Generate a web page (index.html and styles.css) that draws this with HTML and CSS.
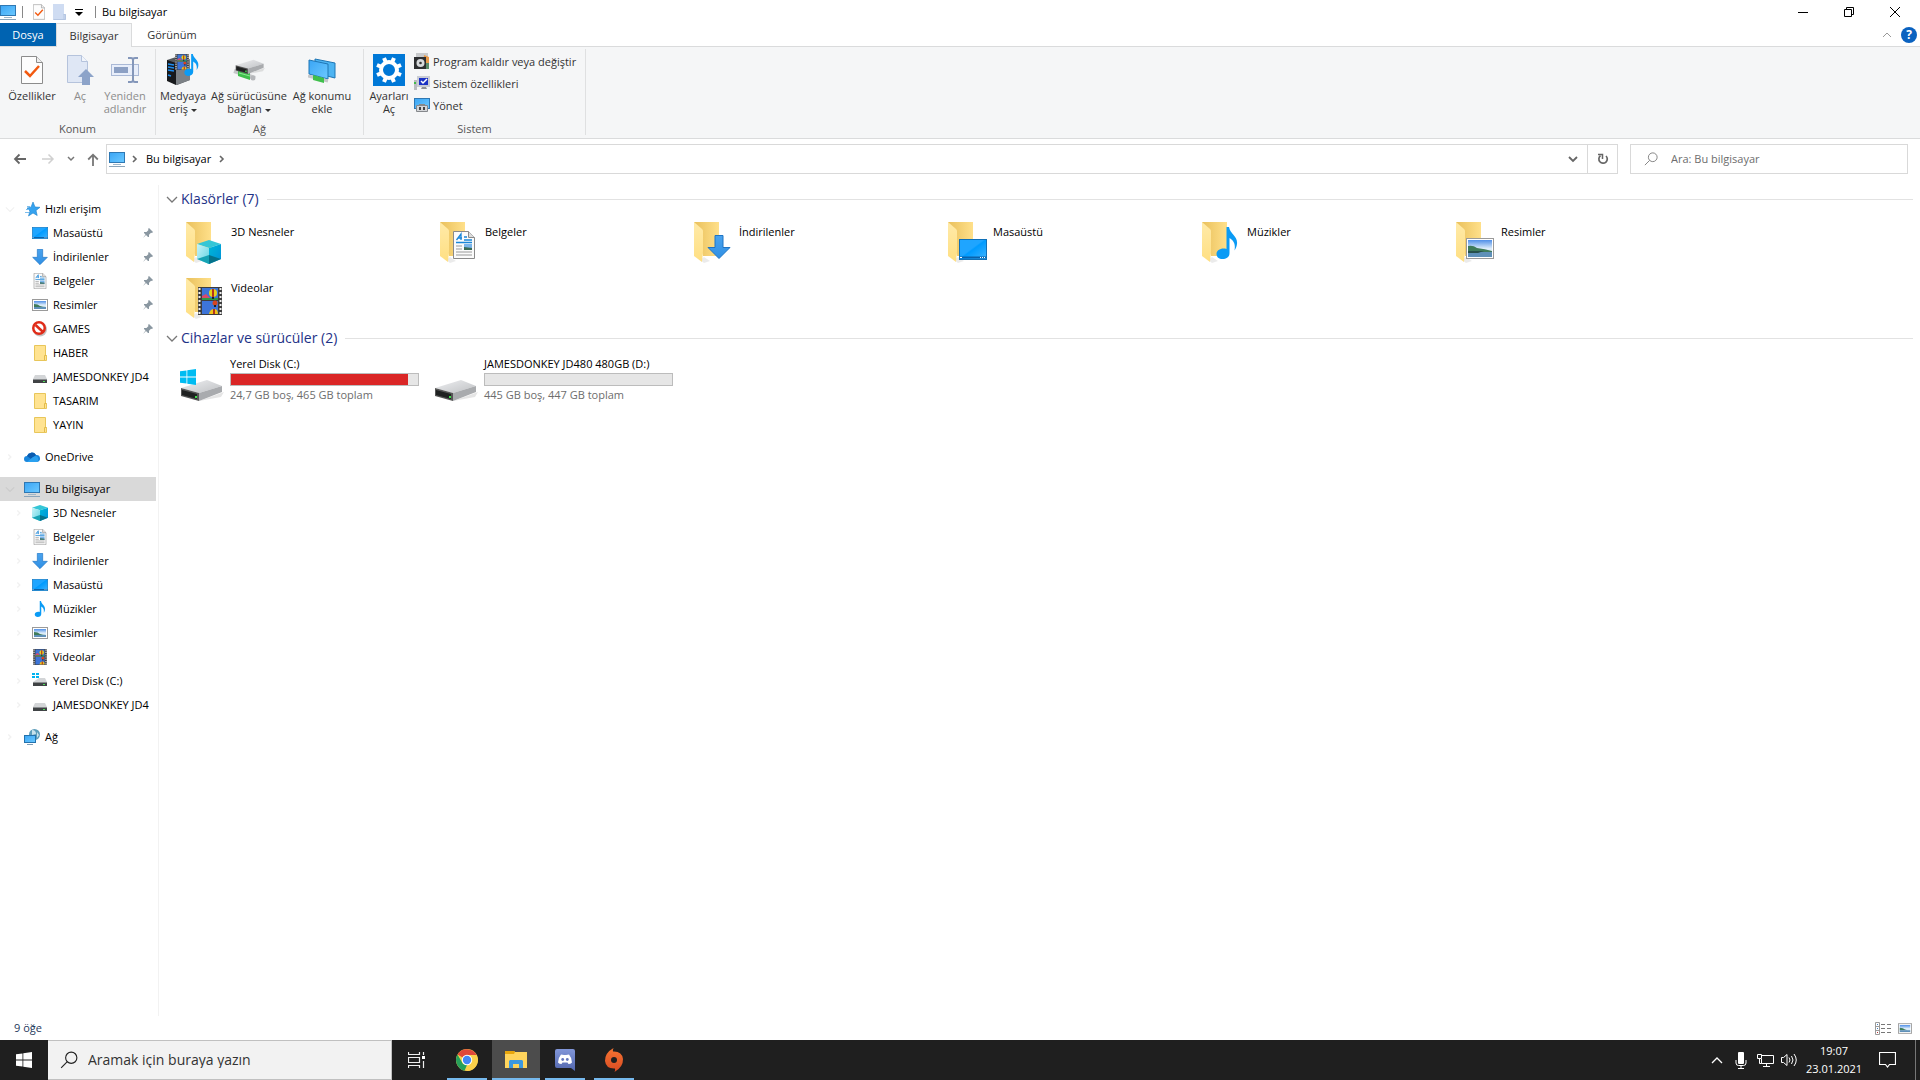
FILE: index.html
```html
<!DOCTYPE html>
<html lang="tr">
<head>
  <meta charset="UTF-8">
  <meta name="viewport" content="width=device-width, initial-scale=1.0">
  <title>Bu bilgisayar</title>
  <link rel="stylesheet" href="styles.css">
</head>
<body>

  <!-- icon library -->
  <svg class="sprite" width="0" height="0" aria-hidden="true">
    <defs>
      <linearGradient id="gScreen" x1="0" y1="0" x2="1" y2="1"><stop offset="0" stop-color="#3aa5f5"/><stop offset="1" stop-color="#6cc9ff"/></linearGradient>
      <linearGradient id="gDesk" x1="0" y1="0" x2="1" y2="1"><stop offset="0" stop-color="#1fa5ff"/><stop offset=".45" stop-color="#1fa5ff"/><stop offset=".5" stop-color="#009bff"/><stop offset="1" stop-color="#40b4ff"/></linearGradient>
      <linearGradient id="gFoldBack" x1="0" y1="0" x2="1" y2="0"><stop offset="0" stop-color="#e9c05c"/><stop offset="1" stop-color="#ffe08a"/></linearGradient>
      <linearGradient id="gFoldFront" x1="0" y1="0" x2="0" y2="1"><stop offset="0" stop-color="#ffeaa8"/><stop offset="1" stop-color="#ffdf82"/></linearGradient>
      <linearGradient id="gArrow" x1="0" y1="0" x2="0" y2="1"><stop offset="0" stop-color="#4aa3ee"/><stop offset="1" stop-color="#2f8fe4"/></linearGradient>
      <linearGradient id="gSky" x1="0" y1="0" x2="0" y2="1"><stop offset="0" stop-color="#4f8fe8"/><stop offset=".5" stop-color="#dcecfa"/></linearGradient>
      <linearGradient id="gDrive" x1="0" y1="0" x2="1" y2="1"><stop offset="0" stop-color="#eeeff1"/><stop offset="1" stop-color="#bfc1c4"/></linearGradient>
      <linearGradient id="gCubeL" x1="0" y1="0" x2="1" y2="1"><stop offset="0" stop-color="#c9f4f8"/><stop offset="1" stop-color="#5fd3e2"/></linearGradient>
      <linearGradient id="gCubeR" x1="0" y1="0" x2="1" y2="1"><stop offset="0" stop-color="#00b8d8"/><stop offset="1" stop-color="#0090d8"/></linearGradient>
      <linearGradient id="gDiscord" x1="0" y1="0" x2="0" y2="1"><stop offset="0" stop-color="#8196d8"/><stop offset="1" stop-color="#5266ad"/></linearGradient>
      <linearGradient id="gOrigin" x1="0" y1="0" x2="0" y2="1"><stop offset="0" stop-color="#f57432"/><stop offset="1" stop-color="#d94b22"/></linearGradient>
    </defs>

    <symbol id="i-pc" viewBox="0 0 16 16">
      <rect x=".5" y="1.500" width="15" height="10" fill="url(#gScreen)" stroke="#2f78b3"/>
      <path d="M4 13.500h8" stroke="#9fb6c8"/><path d="M0 15.500h16" stroke="#8ba5ba"/>
    </symbol>
    <symbol id="i-check" viewBox="0 0 22 28">
      <path d="M.5.5h15l6 6v21H.5z" fill="#fdfdfd" stroke="#8c8c8c"/>
      <path d="M15.500.5v6h6" fill="#eee" stroke="#8c8c8c"/>
      <path d="M4 15l5 5L18 10" fill="none" stroke="#f2590f" stroke-width="2.500"/>
    </symbol>
    <symbol id="i-folder-pale" viewBox="0 0 13 16">
      <path d="M0 0h11v10h2v6H0z" fill="#cfdcf2"/><path d="M11 10v6M.5 15.500h12V10.500h-2" stroke="#b5c6e2" fill="none"/>
    </symbol>
    <symbol id="i-open" viewBox="0 0 28 30">
      <path d="M1.500.5h14l6 6v21h-20z" fill="#dfe7f5" stroke="#b5c3dc"/><path d="M15.500.5v6h6" fill="#f1f5fb" stroke="#b5c3dc"/>
      <path d="M20 14l8 8h-4v8h-8v-8h-4z" fill="#8ca3c9"/>
    </symbol>
    <symbol id="i-rename" viewBox="0 0 28 26">
      <rect x=".5" y="7.500" width="27" height="11" fill="#e8eefa" stroke="#aab9d6"/>
      <rect x="3" y="10" width="14" height="6" fill="#8ca0c4"/>
      <path d="M17 1h3q2 0 2 2v20q0 2-2 2h-3M27 1h-3q-2 0-2 2M27 25h-3q-2 0-2-2" fill="none" stroke="#8497ba" stroke-width="2"/>
    </symbol>
    <symbol id="i-film" viewBox="0 0 24 28">
      <path d="M0 0h24v28H0z" fill="#3d3d3d"/>
      <path d="M4 1h16v12H4zM4 14h16v13H4z" fill="#3d74d8"/>
      <path d="M1.500 1v27M22.500 1v27" stroke="#eee" stroke-width="2" stroke-dasharray="2 2"/>
      <path d="M4 9l4-2 3 3 3 3H4z" fill="#d84a6a"/><path d="M4 11h16v2H4z" fill="#2c9a48"/>
      <circle cx="15" cy="6" r="4" fill="#e8d21c"/><path d="M15 2v8" stroke="#b6331e" stroke-width="2"/><path d="M14 10h2v2h-2z" fill="#222"/>
      <circle cx="17" cy="16" r="2.500" fill="#d6451f"/><path d="M16 18h2v2h-2z" fill="#222"/>
      <path d="M11 27q1-5 5-5t4 5z" fill="#f0c419"/><path d="M15 22h2v5h-2z" fill="#b6331e"/>
    </symbol>
    <symbol id="i-note" viewBox="0 0 22 32">
      <path d="M10.500 0H13c1 7 9 9 8 17-.3 3-1.500 5-2.500 6.500.8-5 .5-9-5-12.500V26c0 4-3 6-7 6-3.500 0-6-2-6-5 0-4 5-6.500 10-5z" fill="#0a9bf5"/>
    </symbol>
    <symbol id="i-media" viewBox="0 0 32 32">
      <path d="M0 6l9-3 14 3v20l-13 5L0 26z" fill="#555a60"/><path d="M0 6l9 3v22L0 27z" fill="#17191c"/><path d="M9 9l14-4v21L9 31z" fill="#7c8186"/>
      <path d="M1 10l6 1M1 13l6 1M1 16l6 1M1 21l3 1" stroke="#1e8df0" stroke-width="1.500"/>
      <use href="#i-film" x="8" y="0" width="14" height="16"/>
      <use href="#i-note" x="17" y="0" width="15" height="22"/>
    </symbol>
    <symbol id="i-drive" viewBox="0 0 44 22">
      <path d="M6 19l13 3 25-9-3 5-22 4z" fill="#000" opacity=".1"/>
      <path d="M1 9L27 1l15 6-23 7z" fill="url(#gDrive)"/>
      <path d="M42 7v6l-23 9v-8z" fill="#a9abae"/>
      <path d="M1 9l18 5v8L1 17z" fill="#555"/><path d="M2 11l15 4v5L2 16z" fill="#1f2121"/>
      <path d="M15 17h2v2h-2z" fill="#3fe04c"/>
    </symbol>
    <symbol id="i-netdrive" viewBox="0 0 32 22">
      <path d="M1 12l21 7" stroke="#c4c6c8" stroke-width="4"/><path d="M5 11l12 3v7L5 17z" fill="#3fbf4c"/><path d="M6 14l11 3" stroke="#8be892"/>
      <use href="#i-drive" x="2" y="0" width="30" height="15"/>
      <circle cx="20" cy="19" r="2.500" fill="#b5b7ba"/>
    </symbol>
    <symbol id="i-netplace" viewBox="0 0 28 25">
      <path d="M7 1l20 4v15L7 15z" fill="#4db4f2" stroke="#1f76b5"/>
      <path d="M1 2l19 4v15L1 16z" fill="url(#gScreen)" stroke="#1f76b5"/>
      <path d="M0 18l20 5" stroke="#c4c6c8" stroke-width="3"/><path d="M5 17l11 3v5L5 22z" fill="#3fbf4c"/>
    </symbol>
    <symbol id="i-settings" viewBox="0 0 32 32">
      <path d="M0 0h32v32H0z" fill="#0078d7"/>
      <circle cx="16" cy="16" r="8" fill="none" stroke="#fff" stroke-width="4"/>
      <path d="M16 3v5M16 24v5M3 16h5M24 16h5M6.800 6.800l3.500 3.500M21.700 21.700l3.500 3.500M6.800 25.200l3.500-3.500M21.700 10.300l3.500-3.500" stroke="#fff" stroke-width="4" transform="rotate(22.500 16 16)"/>
    </symbol>
    <symbol id="i-program" viewBox="0 0 16 16">
      <path d="M2 0h12v4H2z" fill="#c8cacc"/><path d="M10 2l5 2v11H9z" fill="#e89a4a"/><path d="M9 10h6v6H9z" fill="#5c8d6b"/>
      <path d="M0 4h12v12H0z" fill="#2d2f31"/><circle cx="6.500" cy="10" r="4" fill="#d7dadc"/><circle cx="6.500" cy="10" r="1.300" fill="#333"/>
    </symbol>
    <symbol id="i-sysprop" viewBox="0 0 16 16">
      <path d="M0 5h3v10H0z" fill="#b9bcc0"/><path d="M0 7h2v2H0z" fill="#41b94a"/>
      <path d="M3 1h13v11H3z" fill="#c9ccd4"/><path d="M5 3h9v7H5z" fill="#1b32c4"/>
      <path d="M7 6l2 2 4-4" fill="none" stroke="#fff" stroke-width="1.500"/><path d="M8 12h4l1 2H7z" fill="#8e9196"/>
    </symbol>
    <symbol id="i-manage" viewBox="0 0 16 16">
      <rect x=".5" y="1.500" width="15" height="10" fill="url(#gScreen)" stroke="#2f78b3"/>
      <path d="M5 7h6v2H5z" fill="#888"/><path d="M2.500 8.500h11v6h-11z" fill="#d4d6d9" stroke="#85888c"/><path d="M5 10h2v3H5zM9 10h2v3H9z" fill="#444"/>
    </symbol>
    <symbol id="i-search" viewBox="0 0 16 16">
      <circle cx="10" cy="6" r="5" fill="none" stroke="currentColor"/><path d="M6.500 9.500L1 15" stroke="currentColor"/>
    </symbol>
    <symbol id="i-star" viewBox="0 0 16 16">
      <path d="M9 1l2 5 5 .3-4 3.200 1.200 5L9 12l-4.500 3L6 10 3 7l4-.8z" fill="#35a3f0" stroke="#1b7fc9" stroke-width=".6"/>
      <path d="M3 5.500h3M2 8.500h3M1 11.500h4" stroke="#7dbdec"/>
    </symbol>
    <symbol id="i-desk" viewBox="0 0 28 21">
      <rect x=".5" y=".5" width="27" height="20" fill="url(#gDesk)" stroke="#0f70b8"/>
      <path d="M1 18.500h26" stroke="#0b62ab" stroke-width="2"/><path d="M1 18.500h2M21 18.500h1M23 18.500h1M25 18.500h1" stroke="#fff"/>
    </symbol>
    <symbol id="i-down" viewBox="0 0 24 24">
      <path d="M8 .5h8v12h7L12 23.500 1 12.500h7z" fill="url(#gArrow)" stroke="#1f74c4"/>
    </symbol>
    <symbol id="i-doc" viewBox="0 0 22 28">
      <path d="M.5.5h15l6 6v21H.5z" fill="#fbfbfb" stroke="#8a8a8a"/><path d="M15.500.5v6h6" fill="#ddd" stroke="#8a8a8a"/>
      <path d="M3.500 9l4.500-6v6M5 7h4M11 6h3M11 9h8M3 11.500h16" fill="none" stroke="#1a86d8" stroke-width="1.300"/>
      <path d="M3 15h6M3 18h6M3 21h16M3 24h16" stroke="#9a9a9a" stroke-width="1.200"/>
      <path d="M11 13h8v6h-8z" fill="#79b4ea"/><path d="M11 16l8 1v2h-8z" fill="#3a6b55"/>
    </symbol>
    <symbol id="i-pic" viewBox="0 0 28 21">
      <rect x=".5" y=".5" width="27" height="20" fill="#fff" stroke="#9a9a9a"/>
      <path d="M2 2h24v17H2z" fill="url(#gSky)"/><path d="M2 8q5-1 9 2 8 1 15 3v2H2z" fill="#3f7b5a"/><path d="M2 14h24v5H2z" fill="#5f90b8"/><path d="M2 13h16l-6 2H2z" fill="#274f4a"/>
    </symbol>
    <!-- small picture frame for the tree and view switch -->
    <symbol id="i-pic-s" viewBox="0 0 16 12">
      <rect x=".5" y=".5" width="15" height="11" fill="#fff" stroke="#9a9a9a"/>
      <path d="M2 2h12v8H2z" fill="url(#gSky)"/><path d="M2 5q4 0 6 2 3 1 6 1H2z" fill="#3f7b5a"/><path d="M2 8h12v2H2z" fill="#5f90b8"/>
    </symbol>
    <symbol id="i-ban" viewBox="0 0 16 16">
      <circle cx="8" cy="8.500" r="7" fill="#8a8a8a" opacity=".5"/><circle cx="7" cy="7" r="7" fill="#e02b18"/><circle cx="7" cy="7" r="4.500" fill="#fff"/><path d="M3.500 4l7 6.500" stroke="#e02b18" stroke-width="2.500"/>
    </symbol>
    <symbol id="i-folder" viewBox="0 0 16 16">
      <path d="M2.500.5h11v10h1v5h-12z" fill="#ffe391" stroke="#e8c65a"/><path d="M12.500 15v-4.500h2" fill="none" stroke="#e3bb4a"/>
    </symbol>
    <symbol id="i-hdd" viewBox="0 0 16 16">
      <path d="M3 6h10l2 4H1z" fill="#d3d5d7"/><path d="M1 10h14v4H1z" fill="#404345"/><path d="M1 10h14v1H1z" fill="#8b8e90"/><path d="M11 12h2v1h-2z" fill="#4fe05a"/>
    </symbol>
    <symbol id="i-cdrive" viewBox="0 0 16 16">
      <path d="M0 0h3v2H0zM4 0h3v2H4zM0 3h3v2H0zM4 3h3v2H4z" fill="#00b3f0"/>
      <path d="M7 5h6l2 4H1z" fill="#d3d5d7"/><path d="M1 9h14v4H1z" fill="#404345"/><path d="M1 9h14v1H1z" fill="#8b8e90"/><path d="M11 11h2v1h-2z" fill="#4fe05a"/>
    </symbol>
    <symbol id="i-cloud" viewBox="0 0 16 16">
      <path d="M3 13a3 3 0 0 1 0-6 5 5 0 0 1 9-1 3.500 3.500 0 0 1 1 7z" fill="#1a86dc"/><path d="M3 7a5 5 0 0 1 9-1l-5 4z" fill="#0b5cb0"/><path d="M3 13l6-5 3-1a3.500 3.500 0 0 1 1 6z" fill="#2aa1f0"/>
    </symbol>
    <symbol id="i-cube" viewBox="0 0 24 24">
      <path d="M12 0l12 4-12 4L0 4z" fill="#35c6d6"/><path d="M0 4l12 4v16L0 19z" fill="url(#gCubeL)"/><path d="M12 8l12-4v15l-12 5z" fill="url(#gCubeR)"/>
      <path d="M0 19l12-4v9z" fill="#17a3b4"/><path d="M12 15l12 4-12 5z" fill="#05728a"/>
    </symbol>
    <symbol id="i-net" viewBox="0 0 16 16">
      <circle cx="10.500" cy="5.500" r="5.500" fill="#5d9dba"/><path d="M8 1q4 0 4 4l-4 1zM13 3l2 3-2 3z" fill="#c9e2ec"/>
      <rect x=".5" y="6.500" width="11" height="7" fill="url(#gScreen)" stroke="#2472ad"/><path d="M3 15.500h6" stroke="#7f9db5"/>
    </symbol>
    <symbol id="i-pin" viewBox="0 0 10 10">
      <path d="M6 0l4 4-1 1-1-.3-2 2V9L5 9 3 7 0 10l2.500-3.500L1 5V4h2.500l2-2L5 1z" fill="#8a97a1"/>
    </symbol>
    <symbol id="i-bigfolder" viewBox="0 0 38 42">
      <path d="M6 38l4 3 6-2-6-4z" fill="#000" opacity=".08"/>
      <path d="M0 0h25v34H9z" fill="url(#gFoldBack)"/><path d="M0 0l8 7q1 1 1 2v20l-1 11-8-6z" fill="url(#gFoldFront)"/>
    </symbol>
    <symbol id="i-win" viewBox="0 0 16 16">
      <path d="M0 2.300l6.500-.9v6.100H0zM7.300 1.300L16 0v7.500H7.300zM0 8.400h6.500v6.200L0 13.700zM7.300 8.400H16V16l-8.700-1.200z" fill="currentColor"/>
    </symbol>
    <symbol id="i-down-chev" viewBox="0 0 12 12"><path d="M1 4l5 5 5-5" fill="none" stroke="currentColor" stroke-width="1.300"/></symbol>
    <symbol id="i-right-chev" viewBox="0 0 12 12"><path d="M4 3l3 3-3 3" fill="none" stroke="currentColor" stroke-width="1.600"/></symbol>
  </svg>

  <div class="window">

    <header class="titlebar">
      <svg class="ico16"><use href="#i-pc"/></svg>
      <span class="tick"></span>
      <button class="quick" aria-label="Özellikler"><svg class="quick-doc"><use href="#i-check"/></svg></button>
      <button class="quick" aria-label="Yeni klasör"><svg class="quick-folder"><use href="#i-folder-pale"/></svg></button>
      <button class="quick" aria-label="Hızlı erişim araç çubuğu"><svg width="8" height="8" viewBox="0 0 8 8"><path d="M0 1.500h8" stroke="#000"/><path d="M0 4h8L4 8z"/></svg></button>
      <span class="tick"></span>
      <h1>Bu bilgisayar</h1>
      <div class="window-buttons">
        <button aria-label="Simge durumuna küçült"><svg width="10" height="10" viewBox="0 0 10 10"><path d="M0 5.500h10" stroke="#000"/></svg></button>
        <button aria-label="Geri yükle"><svg width="10" height="10" viewBox="0 0 10 10"><path d="M2.500 2V.5h7v7H8M.5 2.500h7v7h-7z" fill="none" stroke="#000"/></svg></button>
        <button aria-label="Kapat"><svg width="10" height="10" viewBox="0 0 10 10"><path d="M0 0l10 10M10 0L0 10" stroke="#000"/></svg></button>
      </div>
    </header>

    <nav class="tabs">
      <button class="tab file">Dosya</button>
      <button class="tab active">Bilgisayar</button>
      <button class="tab">Görünüm</button>
      <div class="tabs-right">
        <button aria-label="Şeridi simge durumuna küçült"><svg width="10" height="6" viewBox="0 0 10 6"><path d="M1 5l4-4 4 4" fill="none" stroke="#999"/></svg></button>
        <button class="help" aria-label="Yardım">?</button>
      </div>
    </nav>

    <div class="ribbon">
      <section class="group group-location">
        <div class="tools">
          <button class="tool w60"><svg class="doc-ico"><use href="#i-check"/></svg><span>Özellikler</span></button>
          <button class="tool w30" disabled><svg class="open-ico"><use href="#i-open"/></svg><span>Aç</span></button>
          <button class="tool w54" disabled><svg class="rename-ico"><use href="#i-rename"/></svg><span>Yeniden<br>adlandır</span></button>
        </div>
        <h2>Konum</h2>
      </section>
      <section class="group group-network">
        <div class="tools">
          <button class="tool w54"><svg class="ico32"><use href="#i-media"/></svg><span>Medyaya<br>eriş <i class="caret"></i></span></button>
          <button class="tool w78"><svg class="netdrive-ico"><use href="#i-netdrive"/></svg><span>Ağ sürücüsüne<br>bağlan <i class="caret"></i></span></button>
          <button class="tool w68"><svg class="netplace-ico"><use href="#i-netplace"/></svg><span>Ağ konumu<br>ekle</span></button>
        </div>
        <h2>Ağ</h2>
      </section>
      <section class="group group-system">
        <div class="tools">
          <button class="tool w50"><svg class="ico32"><use href="#i-settings"/></svg><span>Ayarları<br>Aç</span></button>
          <div class="small-tools">
            <button><svg class="ico16"><use href="#i-program"/></svg>Program kaldır veya değiştir</button>
            <button><svg class="ico16"><use href="#i-sysprop"/></svg>Sistem özellikleri</button>
            <button><svg class="ico16"><use href="#i-manage"/></svg>Yönet</button>
          </div>
        </div>
        <h2>Sistem</h2>
      </section>
    </div>

    <div class="address-row">
      <div class="nav-buttons">
        <button aria-label="Geri"><svg width="14" height="12" viewBox="0 0 14 12"><path d="M13 6H2M6.500 1.500L2 6l4.500 4.500" fill="none" stroke="#666" stroke-width="1.800"/></svg></button>
        <button class="wide" aria-label="İleri"><svg width="14" height="12" viewBox="0 0 14 12"><path d="M1 6h11M7.500 1.500L12 6l-4.500 4.500" fill="none" stroke="#d0d0d0" stroke-width="1.500"/></svg></button>
        <button class="narrow" aria-label="Son konumlar"><svg width="8" height="6" viewBox="0 0 8 6"><path d="M1 1l3 3 3-3" fill="none" stroke="#777" stroke-width="1.500"/></svg></button>
        <button aria-label="Yukarı"><svg width="12" height="13" viewBox="0 0 12 13"><path d="M6 13V2M1.200 6.500L6 1.700l4.800 4.800" fill="none" stroke="#777" stroke-width="1.800"/></svg></button>
      </div>
      <div class="address">
        <svg class="ico16"><use href="#i-pc"/></svg>
        <svg class="crumb-sep"><use href="#i-right-chev"/></svg>
        <a href="#">Bu bilgisayar</a>
        <svg class="crumb-sep"><use href="#i-right-chev"/></svg>
        <button class="drop" aria-label="Önceki konumlar"><svg width="10" height="7" viewBox="0 0 10 7"><path d="M1 1l4 4 4-4" fill="none" stroke="#666" stroke-width="1.800"/></svg></button>
        <button class="refresh" aria-label="Yenile"><svg width="12" height="12" viewBox="0 0 12 12"><path d="M9 3A4.200 4.200 0 1 1 3.500 2.700" fill="none" stroke="#666" stroke-width="1.700"/><path d="M1 1.500h4.500V6" fill="none" stroke="#666" stroke-width="1.500"/></svg></button>
      </div>
      <label class="search">
        <svg width="14" height="14"><use href="#i-search"/></svg>
        <input type="text" placeholder="Ara: Bu bilgisayar" aria-label="Ara: Bu bilgisayar">
      </label>
    </div>

    <div class="content">
      <aside class="tree">
        <div class="branch">
          <a class="root" href="#"><svg class="exp"><use href="#i-down-chev"/></svg><svg class="ico16"><use href="#i-star"/></svg><span>Hızlı erişim</span></a>
          <a href="#"><svg class="ico16"><use href="#i-desk"/></svg><span>Masaüstü</span><svg class="pin"><use href="#i-pin"/></svg></a>
          <a href="#"><svg class="ico16"><use href="#i-down"/></svg><span>İndirilenler</span><svg class="pin"><use href="#i-pin"/></svg></a>
          <a href="#"><svg class="ico16"><use href="#i-doc"/></svg><span>Belgeler</span><svg class="pin"><use href="#i-pin"/></svg></a>
          <a href="#"><svg class="ico16"><use href="#i-pic-s"/></svg><span>Resimler</span><svg class="pin"><use href="#i-pin"/></svg></a>
          <a href="#"><svg class="ico16"><use href="#i-ban"/></svg><span>GAMES</span><svg class="pin"><use href="#i-pin"/></svg></a>
          <a href="#"><svg class="ico16"><use href="#i-folder"/></svg><span>HABER</span></a>
          <a href="#"><svg class="ico16"><use href="#i-hdd"/></svg><span>JAMESDONKEY JD4</span></a>
          <a href="#"><svg class="ico16"><use href="#i-folder"/></svg><span>TASARIM</span></a>
          <a href="#"><svg class="ico16"><use href="#i-folder"/></svg><span>YAYIN</span></a>
        </div>
        <div class="branch">
          <a class="root" href="#"><svg class="exp"><use href="#i-right-chev"/></svg><svg class="ico16"><use href="#i-cloud"/></svg><span>OneDrive</span></a>
        </div>
        <div class="branch">
          <a class="root selected" href="#"><svg class="exp"><use href="#i-down-chev"/></svg><svg class="ico16"><use href="#i-pc"/></svg><span>Bu bilgisayar</span></a>
          <a href="#"><svg class="exp"><use href="#i-right-chev"/></svg><svg class="ico16"><use href="#i-cube"/></svg><span>3D Nesneler</span></a>
          <a href="#"><svg class="exp"><use href="#i-right-chev"/></svg><svg class="ico16"><use href="#i-doc"/></svg><span>Belgeler</span></a>
          <a href="#"><svg class="exp"><use href="#i-right-chev"/></svg><svg class="ico16"><use href="#i-down"/></svg><span>İndirilenler</span></a>
          <a href="#"><svg class="exp"><use href="#i-right-chev"/></svg><svg class="ico16"><use href="#i-desk"/></svg><span>Masaüstü</span></a>
          <a href="#"><svg class="exp"><use href="#i-right-chev"/></svg><svg class="ico16"><use href="#i-note"/></svg><span>Müzikler</span></a>
          <a href="#"><svg class="exp"><use href="#i-right-chev"/></svg><svg class="ico16"><use href="#i-pic-s"/></svg><span>Resimler</span></a>
          <a href="#"><svg class="exp"><use href="#i-right-chev"/></svg><svg class="ico16"><use href="#i-film"/></svg><span>Videolar</span></a>
          <a href="#"><svg class="exp"><use href="#i-right-chev"/></svg><svg class="ico16"><use href="#i-cdrive"/></svg><span>Yerel Disk (C:)</span></a>
          <a href="#"><svg class="exp"><use href="#i-right-chev"/></svg><svg class="ico16"><use href="#i-hdd"/></svg><span>JAMESDONKEY JD4</span></a>
        </div>
        <div class="branch">
          <a class="root" href="#"><svg class="exp"><use href="#i-right-chev"/></svg><svg class="ico16"><use href="#i-net"/></svg><span>Ağ</span></a>
        </div>
      </aside>

      <main class="files">
        <section>
          <h2 class="heading"><svg class="toggle"><use href="#i-down-chev"/></svg>Klasörler (7)</h2>
          <div class="grid folders">
            <a href="#" class="folder"><svg width="44" height="44"><use href="#i-bigfolder" width="38" height="42"/><use href="#i-cube" x="11" y="18" width="24" height="24"/></svg><span>3D Nesneler</span></a>
            <a href="#" class="folder"><svg width="44" height="44"><use href="#i-bigfolder" width="38" height="42"/><use href="#i-doc" x="13" y="9" width="22" height="28"/></svg><span>Belgeler</span></a>
            <a href="#" class="folder"><svg width="44" height="44"><use href="#i-bigfolder" width="38" height="42"/><use href="#i-down" x="13" y="13" width="24" height="24"/></svg><span>İndirilenler</span></a>
            <a href="#" class="folder"><svg width="44" height="44"><use href="#i-bigfolder" width="38" height="42"/><use href="#i-desk" x="11" y="17" width="28" height="21"/></svg><span>Masaüstü</span></a>
            <a href="#" class="folder"><svg width="44" height="44"><use href="#i-bigfolder" width="38" height="42"/><use href="#i-note" x="14" y="5" width="22" height="32"/></svg><span>Müzikler</span></a>
            <a href="#" class="folder"><svg width="44" height="44"><use href="#i-bigfolder" width="38" height="42"/><use href="#i-pic" x="10" y="16" width="28" height="21"/></svg><span>Resimler</span></a>
            <a href="#" class="folder"><svg width="44" height="44"><use href="#i-bigfolder" width="38" height="42"/><use href="#i-film" x="12" y="9" width="24" height="28"/></svg><span>Videolar</span></a>
          </div>
        </section>

        <section>
          <h2 class="heading"><svg class="toggle"><use href="#i-down-chev"/></svg>Cihazlar ve sürücüler (2)</h2>
          <div class="grid drives">
            <a href="#" class="drive">
              <svg width="44" height="34" viewBox="0 0 44 34"><use href="#i-drive" x="0" y="10" width="44" height="22"/><use href="#i-win" class="winlogo" x="0" y="0" width="16" height="16"/></svg>
              <div class="drive-info">
                <label for="diskC">Yerel Disk (C:)</label>
                <progress id="diskC" class="full" max="465" value="440"></progress>
                <small>24,7 GB boş, 465 GB toplam</small>
              </div>
            </a>
            <a href="#" class="drive">
              <svg width="44" height="34" viewBox="0 0 44 34"><use href="#i-drive" x="0" y="10" width="44" height="22"/></svg>
              <div class="drive-info">
                <label for="diskD">JAMESDONKEY JD480 480GB (D:)</label>
                <progress id="diskD" max="447" value="0"></progress>
                <small>445 GB boş, 447 GB toplam</small>
              </div>
            </a>
          </div>
        </section>
      </main>
    </div>

    <footer class="statusbar">
      <span>9 öğe</span>
      <div class="views">
        <button aria-label="Ayrıntılar"><svg width="16" height="13" viewBox="0 0 16 13"><path d="M.5.5h4v12h-4zM.5 4.500h4M.5 8.500h4" fill="none" stroke="#9a9a9a"/><path d="M2 2h1v1H2zM2 6h1v1H2z" fill="#4480c0"/><path d="M2 10h1v1H2z" fill="#b33"/><path d="M6 2.500h4M12 2.500h4M6 6.500h4M12 6.500h4M6 10.500h4M12 10.500h4" stroke="#777"/></svg></button>
        <button aria-label="Büyük simgeler"><svg width="14" height="11"><use href="#i-pic-s"/></svg></button>
      </div>
    </footer>
  </div>

  <div class="taskbar">
    <button class="start" aria-label="Başlat"><svg width="16" height="16"><use href="#i-win"/></svg></button>
    <label class="task-search">
      <svg width="18" height="18"><use href="#i-search"/></svg>
      <input type="text" placeholder="Aramak için buraya yazın" aria-label="Aramak için buraya yazın">
    </label>
    <button class="app task-view" aria-label="Görev görünümü"><svg width="17" height="16" viewBox="0 0 17 16"><path d="M.5 0v2.500h11V0M.5 16v-2.500h11V16M.5 5.500h11v5H.5zM15.500 0v3M15.500 9v7" fill="none" stroke="#eee" stroke-width="1.200"/><path d="M14 4h3v3h-3z" fill="#fff"/></svg></button>
    <button class="app running" aria-label="Chrome"><svg width="22" height="22" viewBox="0 0 22 22"><circle cx="11" cy="11" r="11" fill="#fbd04a"/><path d="M11 11L1.500 5.500A11 11 0 0 1 20.600 6z" fill="#e0473a"/><path d="M1.500 5.500L7 15l4 1-2.500 5.700A11 11 0 0 1 1.500 5.500z" fill="#26a05a"/><path d="M11 6h9.600A11 11 0 0 1 10.500 22L15 14z" fill="#fbd04a"/><circle cx="11" cy="11" r="5.200" fill="#fff"/><circle cx="11" cy="11" r="4.200" fill="#4386f5"/></svg></button>
    <button class="app running current" aria-label="Dosya Gezgini"><svg width="22" height="20" viewBox="0 0 22 20"><path d="M0 1h9l1 1h12v16H0z" fill="#ffd45c"/><path d="M0 1h9l1 1-1 2H0z" fill="#e8a60c"/><path d="M4 18v-7l1-1h12l1 1v7h-4v-4H8v4z" fill="#3c98e0"/></svg></button>
    <button class="app running" aria-label="Discord"><svg width="20" height="22" viewBox="0 0 20 22"><path d="M2 0h16q2 0 2 2v20l-4-3H2q-2 0-2-2V2q0-2 2-2z" fill="url(#gDiscord)"/><path d="M6 5.500l3 .5h2l3-.5q3 3.500 3 8-1.500 1.500-3.500 1.500l-1-1.500h-5L6.500 15Q4.500 15 3 13.500q0-4.500 3-8z" fill="#fff"/><circle cx="7.700" cy="10.500" r="1.400" fill="#6577bd"/><circle cx="12.300" cy="10.500" r="1.400" fill="#6577bd"/></svg></button>
    <button class="app running" aria-label="Origin"><svg width="20" height="24" viewBox="0 0 20 24"><path d="M9.500 0q-1 2-.5 3.500 9-.5 10 7.500.3 8-8.500 13 1-2 .5-3.500Q2 21 1 13 .7 5 9.500 0z" fill="url(#gOrigin)"/><circle cx="10" cy="12" r="3" fill="#1f1f1f"/></svg></button>

    <div class="tray">
      <button aria-label="Gizli simgeler"><svg width="12" height="8" viewBox="0 0 12 8"><path d="M1 7l5-5 5 5" fill="none" stroke="#fff" stroke-width="1.300"/></svg></button>
      <button aria-label="Mikrofon"><svg width="12" height="17" viewBox="0 0 12 17"><rect x="3" y="0" width="6" height="12" rx="1" fill="#fff"/><path d="M1 8v3q0 2.500 2.500 2.500h5Q11 13.500 11 11V8M6 14v2M3 16.500h6" fill="none" stroke="#fff"/></svg></button>
      <button aria-label="Ağ"><svg width="17" height="15" viewBox="0 0 17 15"><path d="M5 2.500h11.500v8h-12V6M9.500 10.500v3M6 13.500h7M.5 1.500h4v4h-4zM2.500 5.500v5h2" fill="none" stroke="#fff"/></svg></button>
      <button aria-label="Ses"><svg width="17" height="14" viewBox="0 0 17 14"><path d="M.5 4.500h2L6 1.500v11l-3.500-3h-2zM8 4.500q2 2.500 0 5M10.500 3q3 4 0 8M13 1q4.500 6 0 12" fill="none" stroke="#fff"/></svg></button>
      <button class="clock"><time>19:07</time><time>23.01.2021</time></button>
      <button class="notice" aria-label="Bildirimler"><svg width="17" height="16" viewBox="0 0 17 16"><path d="M.5.5h16v12h-6l-2 2.500-2-2.500h-6z" fill="none" stroke="#fff" stroke-width="1.200"/></svg></button>
      <span class="peek"></span>
    </div>
  </div>

</body>
</html>
```

FILE: styles.css
```css
* {
  box-sizing: border-box;
}

body {
  margin: 0;
  height: 100vh;
  display: flex;
  flex-direction: column;
  font-family: "Open Sans", "Noto Sans", sans-serif;
  font-size: 11px;
  line-height: 16px;
  color: #000;
  background: #fff;
}

button {
  font: inherit;
  color: inherit;
  background: none;
  border: none;
  padding: 0;
  display: flex;
  align-items: center;
  justify-content: center;
}

a {
  color: inherit;
  text-decoration: none;
}

h1, h2 {
  margin: 0;
  font-size: 11px;
  font-weight: normal;
}

input {
  font: inherit;
  border: none;
  background: none;
  outline: none;
  padding: 0;
  flex: 1;
  min-width: 0;
}

svg {
  flex: none;
}

.sprite {
  position: absolute;
}

.ico16 {
  width: 16px;
  height: 16px;
}

.ico32 {
  width: 32px;
  height: 32px;
}

.window {
  flex: 1;
  min-height: 0;
  display: flex;
  flex-direction: column;
}

/* title bar */
.titlebar {
  height: 23px;
  display: flex;
  align-items: center;
}

.tick {
  width: 1px;
  height: 12px;
  margin: 0 6px;
  background: #888;
}

.quick {
  width: 20px;
  height: 22px;
}

.quick-doc {
  width: 12px;
  height: 16px;
}

.quick-folder {
  width: 13px;
  height: 16px;
}

.window-buttons {
  display: flex;
  margin-left: auto;
  padding-right: 2px;
}

.window-buttons button {
  width: 46px;
  height: 20px;
}

.window-buttons button:hover {
  background: #e5e5e5;
}

/* ribbon tabs */
.tabs {
  height: 24px;
  display: flex;
  border-bottom: 1px solid #dadbdc;
  color: #333;
}

.tab {
  height: 24px;
  width: 80px;
}

.tab.file {
  width: 56px;
  height: 23px;
  background: #0063b1;
  color: #fff;
}

.tab.active {
  width: 76px;
  background: #f5f6f7;
  border: 1px solid #dadbdc;
  border-bottom: none;
}

.tabs-right {
  display: flex;
  align-items: center;
  gap: 9px;
  margin-left: auto;
  padding-right: 3px;
}

.help {
  width: 16px;
  height: 16px;
  border-radius: 50%;
  background: #0a62c0;
  color: #fff;
  font-size: 12px;
  font-weight: bold;
}

/* ribbon */
.ribbon {
  height: 92px;
  display: flex;
  background: #f5f6f7;
  border-bottom: 1px solid #dadbdc;
  color: #333;
  line-height: 13px;
}

.group {
  display: flex;
  flex-direction: column;
  justify-content: space-between;
  margin: 2px 0 3px;
  padding: 5px 0 0;
  border-right: 1px solid #dfe0e1;
}

.group h2 {
  line-height: 13px;
  text-align: center;
  color: #555;
}

.group-location {
  width: 156px;
}

.group-network {
  width: 208px;
}

.group-system {
  width: 222px;
}

.tools {
  display: flex;
}

.group-location .tools {
  padding-left: 2px;
  gap: 3px;
}

.tool {
  height: 64px;
  display: grid;
  grid-template-rows: 32px 26px;
  gap: 3px;
  align-content: start;
  justify-items: center;
  align-items: center;
  white-space: nowrap;
  text-align: center;
}

.tool span {
  align-self: start;
}

.tool:disabled {
  color: #8d8d8d;
}

.w30 { width: 30px; }
.w50 { width: 50px; }
.w54 { width: 54px; }
.w60 { width: 60px; }
.w68 { width: 68px; }
.w78 { width: 78px; }

.doc-ico {
  width: 22px;
  height: 28px;
}

.open-ico {
  width: 28px;
  height: 30px;
}

.rename-ico {
  width: 28px;
  height: 26px;
}

.netdrive-ico {
  width: 32px;
  height: 22px;
}

.netplace-ico {
  width: 28px;
  height: 25px;
}

.caret {
  display: inline-block;
  vertical-align: middle;
  border: 3px solid transparent;
  border-top-color: #333;
  border-bottom: none;
}

.small-tools {
  display: flex;
  flex-direction: column;
  align-items: flex-start;
  margin-top: -4px;
}

.small-tools button {
  height: 22px;
  gap: 3px;
  white-space: nowrap;
}

/* address bar */
.address-row {
  height: 42px;
  display: flex;
  align-items: center;
  padding: 0 12px 2px 6px;
}

.nav-buttons {
  width: 100px;
  display: flex;
  align-items: center;
}

.nav-buttons button {
  width: 27px;
  height: 28px;
}

.nav-buttons .wide {
  width: 30px;
}

.nav-buttons .narrow {
  width: 16px;
}

.address {
  flex: 1;
  height: 30px;
  display: flex;
  align-items: center;
  padding-left: 2px;
  border: 1px solid #d9d9d9;
}

.crumb-sep {
  width: 12px;
  height: 12px;
  margin: 0 5px 0 4px;
  color: #666;
}

.address a {
  padding: 0 1px 0 0;
}

.address .drop {
  width: 28px;
  height: 28px;
  margin-left: auto;
}

.address .refresh {
  width: 30px;
  height: 28px;
  border-left: 1px solid #d9d9d9;
}

.search {
  width: 278px;
  height: 30px;
  display: flex;
  align-items: center;
  gap: 13px;
  margin-left: 12px;
  padding: 0 13px;
  border: 1px solid #d9d9d9;
  color: #777;
}

.search input::placeholder {
  color: #6d6d6d;
  opacity: 1;
}

/* navigation tree */
.content {
  flex: 1;
  min-height: 0;
  display: flex;
  padding-top: 4px;
}

.tree {
  width: 159px;
  padding: 12px 2px 0 0;
  border-right: 1px solid #f2f2f2;
}

.branch {
  margin-bottom: 8px;
}

.tree a {
  height: 24px;
  display: flex;
  align-items: center;
  justify-content: flex-end;
  gap: 5px;
  position: relative;
}

.tree a span {
  flex: none;
  width: 103px;
  white-space: nowrap;
}

.tree a.root span {
  width: 111px;
}

.tree a:hover {
  background: #e5f3ff;
}

.tree a.selected {
  background: #d9d9d9;
}

.exp {
  width: 10px;
  height: 10px;
  margin-right: auto;
  margin-left: 14px;
  color: #f1f1f1;
}

.root .exp {
  margin-left: 5px;
}

.selected .exp {
  color: #cbcbcb;
}

.pin {
  width: 10px;
  height: 10px;
  position: absolute;
  right: 3px;
  top: 7px;
}

/* file area */
.files {
  flex: 1;
  padding: 3px 7px 0 7px;
}

.heading {
  display: flex;
  align-items: center;
  gap: 3px;
  height: 22px;
  font-size: 14px;
  line-height: 22px;
  color: #1e3287;
}

.heading::after {
  content: "";
  flex: 1;
  height: 1px;
  margin-left: 5px;
  background: #e2e2e2;
}

.toggle {
  width: 12px;
  height: 12px;
  color: #777;
}

.grid {
  display: grid;
  grid-template-columns: repeat(auto-fill, 254px);
}

.folders {
  padding: 9px 0 4px 14px;
  row-gap: 8px;
}

.folder {
  height: 48px;
  display: flex;
  align-items: flex-start;
  gap: 1px;
  padding: 3px 6px;
}

.folder span {
  padding-top: 2px;
}

.drives {
  padding: 7px 0 0 14px;
}

.drive {
  display: flex;
}

.drive > svg {
  margin: 13px 6px 0 0;
}

.drive-info {
  display: flex;
  flex-direction: column;
  width: 189px;
  white-space: nowrap;
}

.drive-info small {
  font-size: 11px;
  line-height: 16px;
  color: #6d6d6d;
}

.winlogo {
  color: #00bcf2;
}

progress {
  appearance: none;
  display: block;
  width: 100%;
  height: 13px;
  margin: 1px 0;
  border: 1px solid #bcbcbc;
  background: #e6e6e6;
}

progress::-webkit-progress-bar {
  background: #e6e6e6;
}

progress::-webkit-progress-value {
  background: #26a0da;
}

progress.full::-webkit-progress-value {
  background: #da2626;
}

/* status bar */
.statusbar {
  height: 24px;
  display: flex;
  align-items: center;
  justify-content: space-between;
  padding: 0 8px 0 14px;
  color: #1e395b;
}

.views {
  display: flex;
  gap: 7px;
}

/* taskbar */
.taskbar {
  height: 40px;
  display: flex;
  background: #1f1f1f;
  color: #fff;
}

.start {
  width: 48px;
}

.task-search {
  width: 344px;
  display: flex;
  align-items: center;
  gap: 10px;
  padding: 0 12px;
  background: #f2f2f2;
  border: 1px solid #c0c0c0;
  border-left: none;
  color: #222;
  font-size: 14px;
}

.task-search input::placeholder {
  color: #333;
  opacity: 1;
}

.app {
  width: 48px;
  margin-right: 1px;
}

.app.task-view {
  margin-right: 3px;
}

.app.running {
  background: linear-gradient(#76b9ed, #76b9ed) bottom / 40px 2px no-repeat;
}

.app.current {
  background: linear-gradient(#76b9ed, #76b9ed) bottom / 100% 2px no-repeat #4c4c4c;
}

.tray {
  display: flex;
  align-items: center;
  margin-left: auto;
}

.tray button {
  width: 24px;
  height: 40px;
}

.tray .clock {
  width: 58px;
  margin-left: 4px;
  flex-direction: column;
  line-height: 18px;
}

.tray .notice {
  width: 48px;
}

.peek {
  width: 5px;
  height: 40px;
  margin-left: 4px;
  border-left: 1px solid #777;
}
```
